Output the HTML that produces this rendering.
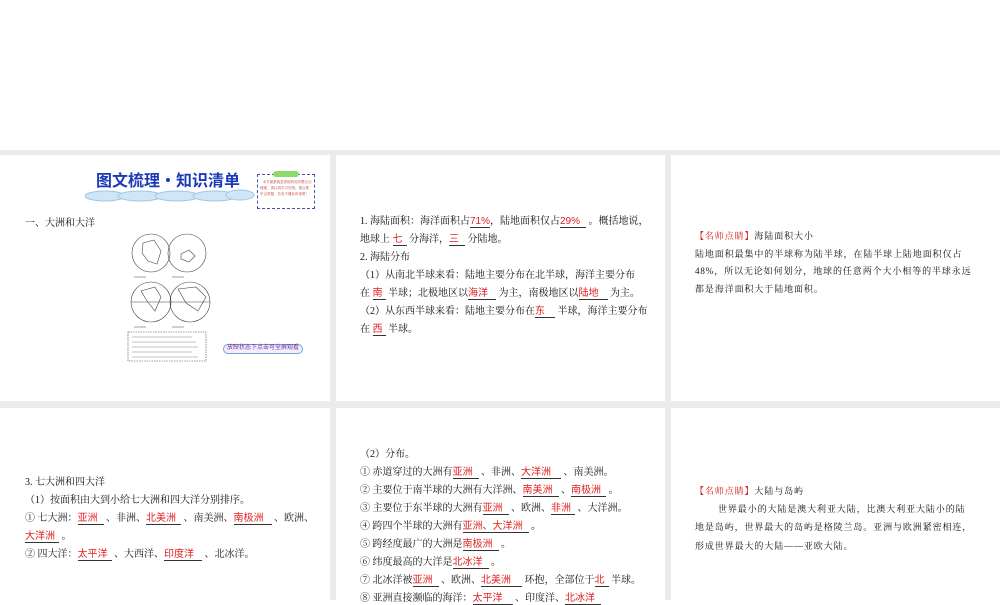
<!DOCTYPE html>
<html><head><meta charset="utf-8"><style>
*{margin:0;padding:0;box-sizing:border-box}
body{width:1000px;height:600px;position:relative;background:#fff;overflow:hidden;font-family:"Liberation Serif","Noto Serif CJK SC","Noto Sans CJK SC",serif;color:#111}
.g{position:absolute;background:#ebebeb}
.l{position:absolute;font-size:10px;white-space:nowrap;line-height:12px}
.s{font-size:9px;letter-spacing:0.9px}
.b{display:inline-block;border-bottom:1px solid #333;color:#e02020;text-align:left;line-height:11px;font-family:"Liberation Sans","Noto Sans CJK SC",sans-serif}
.r{color:#d21f1f}
</style></head><body>
<div class="g" style="left:0;top:150px;width:1000px;height:5px"></div>
<div class="g" style="left:330px;top:150px;width:6px;height:450px"></div>
<div class="g" style="left:665px;top:150px;width:6px;height:450px"></div>
<div class="g" style="left:0;top:401px;width:1000px;height:7px"></div>

<!-- panel 1 -->
<svg style="position:absolute;left:85px;top:186px" width="170" height="20"><g fill="#cfe6f6" stroke="#9cc7e8" stroke-width="1"><ellipse cx="20" cy="10" rx="20" ry="5"/><ellipse cx="55" cy="10" rx="22" ry="5"/><ellipse cx="92" cy="10" rx="22" ry="5"/><ellipse cx="130" cy="10" rx="22" ry="5"/><ellipse cx="155" cy="9" rx="14" ry="5"/></g></svg>
<div class="l" style="left:96px;top:172px;font-size:16px;line-height:20px;font-weight:bold;color:#1a3bb8;font-family:'Liberation Sans','Noto Sans CJK SC',sans-serif">图文梳理・知识清单</div>
<div style="position:absolute;left:257px;top:174px;width:58px;height:35px;border:1px dashed #4050b0;background:#fff"></div>
<div style="position:absolute;left:273px;top:171px;width:26px;height:6px;background:#8fd86a;border-radius:3px"></div>
<div class="l" style="left:260px;top:179px;font-size:3.5px;line-height:6px;color:#c03030;white-space:normal;width:52px">&nbsp;&nbsp;&nbsp;本节最系统是系统的知识整合点梳理，请认真学习归纳，重点要牢记掌握，若有不懂及时请教！</div>
<div class="l" style="left:25px;top:218px;font-size:10px">一、大洲和大洋</div>
<svg style="position:absolute;left:126px;top:231px" width="90" height="132" stroke="#444" fill="none" stroke-width="0.6">
<circle cx="25" cy="22" r="19"/><circle cx="61" cy="22" r="19"/><circle cx="25" cy="71" r="20"/><circle cx="64" cy="71" r="20"/>
<path d="M17 12 L28 9 L35 20 L31 33 L22 30 L16 22Z"/><path d="M55 23 l8 -4 l6 6 l-6 6 l-8 -3z"/>
<path d="M5 71 L45 71 M44 71 L84 71"/><path d="M15 60 l14 -4 l6 10 l-6 14 l-8 -10z"/><path d="M52 58 l18 -2 l10 10 l-8 14 l-12 -8z"/>
<path d="M8 46 h12 M46 46 h12 M8 96 h12 M46 96 h12" stroke-width="0.5"/>
<rect x="2" y="101" width="78" height="29" stroke-dasharray="1.5 1"/>
<path d="M6 106h60M6 111h64M6 116h66M6 121h60M6 126h66" stroke="#888" stroke-width="0.6"/>
</svg>
<div style="position:absolute;left:223px;top:344px;width:80px;height:10px;border:1.5px solid #6fa8d8;border-radius:5px;background:#f4eefc;font-size:6px;line-height:7px;color:#7030a0;text-align:center;font-family:'Liberation Sans','Noto Sans CJK SC',sans-serif">放映状态下点击可全屏观看</div>

<!-- panel 2 -->
<div class="l" style="left:360px;top:216px">1. 海陆面积：海洋面积占<span class="b" style="width:20px">71%</span>，陆地面积仅占<span class="b" style="width:26px">29%</span> 。概括地说，</div>
<div class="l" style="left:360px;top:234px">地球上 <span class="b" style="width:14px">七</span> 分海洋，<span class="b" style="width:16px">三</span> 分陆地。</div>
<div class="l" style="left:360px;top:252px">2. 海陆分布</div>
<div class="l" style="left:360px;top:270px">（1）从南北半球来看：陆地主要分布在北半球，海洋主要分布</div>
<div class="l" style="left:360px;top:288px">在 <span class="b" style="width:13px">南</span> 半球；北极地区以<span class="b" style="width:28px">海洋</span> 为主，南极地区以<span class="b" style="width:29px">陆地</span> 为主。</div>
<div class="l" style="left:360px;top:306px">（2）从东西半球来看：陆地主要分布在<span class="b" style="width:20px">东</span> 半球，海洋主要分布</div>
<div class="l" style="left:360px;top:324px">在 <span class="b" style="width:13px">西</span> 半球。</div>

<!-- panel 3 -->
<div class="l s" style="left:695px;top:230px"><span class="r">【名师点睛】</span>海陆面积大小</div>
<div class="l s" style="left:695px;top:248px">陆地面积最集中的半球称为陆半球，在陆半球上陆地面积仅占</div>
<div class="l s" style="left:695px;top:265px">48%，所以无论如何划分，地球的任意两个大小相等的半球永远</div>
<div class="l s" style="left:695px;top:283px">都是海洋面积大于陆地面积。</div>

<!-- panel 4 -->
<div class="l" style="left:25px;top:477px">3. 七大洲和四大洋</div>
<div class="l" style="left:25px;top:495px">（1）按面积由大到小给七大洲和四大洋分别排序。</div>
<div class="l" style="left:25px;top:513px">① 七大洲：<span class="b" style="width:26px">亚洲</span> 、非洲、<span class="b" style="width:35px">北美洲</span> 、南美洲、<span class="b" style="width:38px">南极洲</span> 、欧洲、</div>
<div class="l" style="left:25px;top:531px"><span class="b" style="width:34px">大洋洲</span> 。</div>
<div class="l" style="left:25px;top:549px">② 四大洋：<span class="b" style="width:34px">太平洋</span> 、大西洋、<span class="b" style="width:38px">印度洋</span> 、北冰洋。</div>

<!-- panel 5 -->
<div class="l" style="left:360px;top:449px">（2）分布。</div>
<div class="l" style="left:360px;top:467px">① 赤道穿过的大洲有<span class="b" style="width:26px">亚洲</span> 、非洲、<span class="b" style="width:40px">大洋洲</span> 、南美洲。</div>
<div class="l" style="left:360px;top:485px">② 主要位于南半球的大洲有大洋洲、<span class="b" style="width:36px">南美洲</span> 、<span class="b" style="width:35px">南极洲</span> 。</div>
<div class="l" style="left:360px;top:503px">③ 主要位于东半球的大洲有<span class="b" style="width:26px">亚洲</span> 、欧洲、<span class="b" style="width:24px">非洲</span> 、大洋洲。</div>
<div class="l" style="left:360px;top:521px">④ 跨四个半球的大洲有<span class="b" style="width:66px">亚洲、大洋洲</span> 。</div>
<div class="l" style="left:360px;top:539px">⑤ 跨经度最广的大洲是<span class="b" style="width:36px">南极洲</span> 。</div>
<div class="l" style="left:360px;top:557px">⑥ 纬度最高的大洋是<span class="b" style="width:36px">北冰洋</span> 。</div>
<div class="l" style="left:360px;top:575px">⑦ 北冰洋被<span class="b" style="width:26px">亚洲</span> 、欧洲、<span class="b" style="width:41px">北美洲</span> 环抱，全部位于<span class="b" style="width:14px">北</span> 半球。</div>
<div class="l" style="left:360px;top:593px">⑧ 亚洲直接濒临的海洋：<span class="b" style="width:40px">太平洋</span> 、印度洋、<span class="b" style="width:36px">北冰洋</span></div>

<!-- panel 6 -->
<div class="l s" style="left:695px;top:485px"><span class="r">【名师点睛】</span>大陆与岛屿</div>
<div class="l s" style="left:718px;top:503px">世界最小的大陆是澳大利亚大陆，比澳大利亚大陆小的陆</div>
<div class="l s" style="left:695px;top:521px">地是岛屿，世界最大的岛屿是格陵兰岛。亚洲与欧洲紧密相连，</div>
<div class="l s" style="left:695px;top:540px">形成世界最大的大陆——亚欧大陆。</div>
</body></html>
